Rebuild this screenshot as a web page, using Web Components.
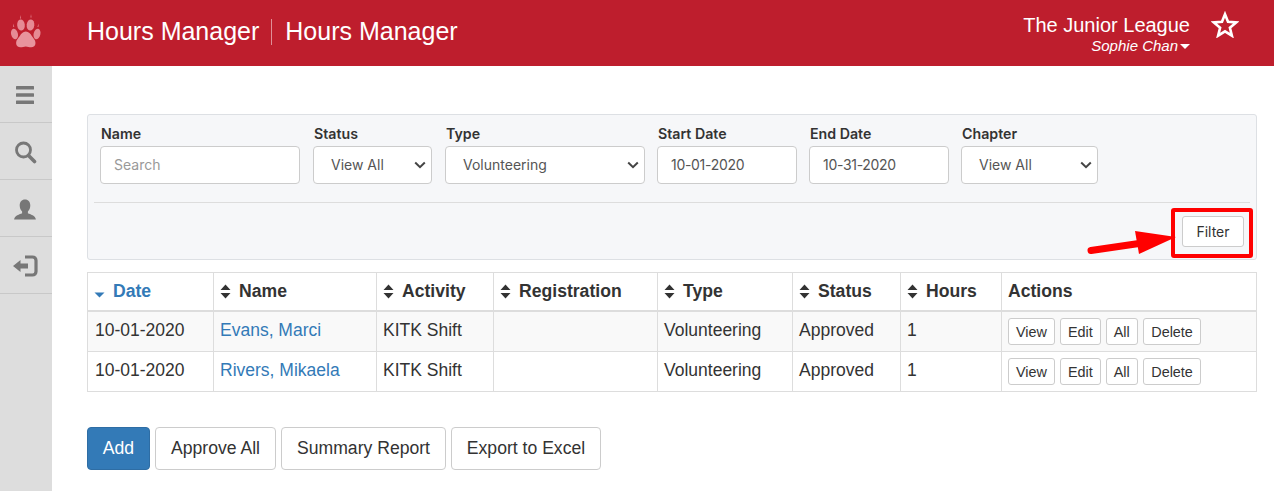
<!DOCTYPE html>
<html><head><meta charset="utf-8"><style>
html,body{margin:0;padding:0;background:#fff;height:491px;overflow:hidden}
body{font-family:"Liberation Sans",Arial,sans-serif;color:#333}
</style></head><body>
<app-shell></app-shell>
<script>
function def(name,css,html,init){
  customElements.define(name,class extends HTMLElement{
    connectedCallback(){
      if(this.shadowRoot)return;
      const r=this.attachShadow({mode:'open'});
      r.innerHTML='<style>'+css+'</style>'+(typeof html==='function'?html(this):html);
    }
  });
}
const sort='<svg width="11" height="15" viewBox="0 0 11 15" style="flex:none"><path d="M5.5 0.5L10.5 6H.5zM5.5 14.5L.5 9H10.5z" fill="#333"/></svg>';

def('top-bar',`
:host{display:flex;height:66px;background:#be1e2d;color:#fff;align-items:stretch}
.logo{width:52px;display:flex;align-items:center;justify-content:center;flex:none;padding-right:1px;box-sizing:border-box}
.titles{display:flex;align-items:center;margin-left:35px;font-size:25px;flex:1;padding-bottom:3px}
.sep{width:1px;height:26px;background:#e08f97;margin:0 13px 0 12px}
.right{display:flex;margin-right:35px;align-items:flex-start}
.org{display:flex;flex-direction:column;align-items:flex-end;padding-top:14px}
.org b{font-weight:400;font-size:20px;line-height:23px}
.org i{font-size:15px;line-height:18px;display:flex;align-items:center;gap:2px}
.org i::after{content:"";border:5px solid transparent;border-top-color:#fff;border-bottom:0;margin-top:1px}
.star{margin:11px 0 0 21px}
`,`<div class="logo"><svg width="32" height="38" viewBox="0 0 32 38" fill="#e68a94">
<ellipse cx="4.500" cy="20" rx="3.400" ry="5.400" transform="rotate(-14 4.500 20)"/>
<ellipse cx="11" cy="11" rx="3.800" ry="5.600" transform="rotate(-6 11 11)"/>
<ellipse cx="20.500" cy="11" rx="3.800" ry="5.600" transform="rotate(6 20.500 11)"/>
<ellipse cx="27" cy="20" rx="3.400" ry="5.400" transform="rotate(14 27 20)"/>
<path d="M15.800 17.500c3 0 4.600 2.200 6 4.600 1.400 2.300 3.700 3.800 3.700 6.800 0 2.900-2.100 4.300-4.300 4.300-2 0-3.500-.8-5.400-.8s-3.400.8-5.400.8c-2.200 0-4.300-1.400-4.300-4.300 0-3 2.300-4.500 3.700-6.800 1.400-2.400 3-4.600 6-4.600z" fill="#e8949d"/>
<path d="M10.500 1l.5 3.600h-1zM21 0l.5 3.600h-1zM3 9.500l1.300 3.200-1 .3zM28.700 9.500l-.3 3.500-1-.3z"/>
</svg></div>
<div class="titles"><span>Hours Manager</span><span class="sep"></span><span>Hours Manager</span></div>
<div class="right"><div class="org"><b>The Junior League</b><i>Sophie Chan</i></div>
<svg class="star" width="28" height="27" viewBox="0 0 28 27"><path d="M14 3.200l3 7.600 8.200.6-6.300 5.300 2 8-6.900-4.400-6.900 4.400 2-8L2.800 11.400l8.200-.6z" fill="none" stroke="#fff" stroke-width="2.600"/></svg></div>`);

def('side-bar',`
:host{display:block;width:52px;background:#ddd;flex:none}
div{border-bottom:1px solid #c8c8c8;display:flex;align-items:center;justify-content:center;padding:2px 3px 0 0;height:54px}
svg{display:block;fill:#777}
`,`<div><svg width="20" height="20" viewBox="0 0 20 20"><rect x="1" y="1" width="18" height="3.600" rx=".5"/><rect x="1" y="8.200" width="18" height="3.600" rx=".5"/><rect x="1" y="15.400" width="18" height="3.600" rx=".5"/></svg></div>
<div><svg width="24" height="24" viewBox="0 0 24 24"><circle cx="10.500" cy="10" r="7" fill="none" stroke="#777" stroke-width="2.800"/><path d="M15.500 15.500L21.500 21.500" stroke="#777" stroke-width="3.600" stroke-linecap="round"/></svg></div>
<div style="padding-top:4px;height:52px"><svg width="24" height="24" viewBox="0 0 24 24"><path d="M12 1.500c3.400 0 5.300 2.600 5.300 6 0 2.400-1 4.700-2.400 6v1.800c2.300 1 7.700 2.400 8 6.200H1.100c.3-3.800 5.700-5.200 8-6.200v-1.800c-1.400-1.300-2.400-3.600-2.400-6 0-3.400 1.900-6 5.300-6z"/></svg></div>
<div><svg width="26" height="22" viewBox="0 0 26 22"><path d="M1 11l7.500-6v3.500H16v5H8.500V17z"/><path d="M13 2h7.500c2 0 3.500 1.500 3.500 3.500v11c0 2-1.500 3.500-3.500 3.500H13" fill="none" stroke="#777" stroke-width="3.200"/></svg></div>`);

def('filter-field',`
:host{display:flex;flex-direction:column;font-family:Inter,sans-serif}
label{font-size:14.200px;font-weight:600;line-height:20px;height:22px;padding-left:1px;color:#333;white-space:nowrap}
.c{box-sizing:border-box;height:38px;border:1px solid #ccc;border-radius:4px;background:#fff;font-size:14px;color:#555;display:flex;align-items:center;justify-content:space-between;padding:0 5px 1px var(--pl,13px);white-space:nowrap}
.ph{color:#999}
.d{letter-spacing:-.3px}
svg{flex:none}
`,h=>{
 const t=h.getAttribute('value')||'';const sel=h.hasAttribute('select');const ph=h.hasAttribute('placeholder');
 const cls=ph?'ph':(/^\d/.test(t)?'d':'');
 return `<label>${h.getAttribute('label')}</label><div class="c" style="${sel?'--pl:17px':''}"><span class="${cls}">${t}</span>${sel?'<svg width="12" height="8" viewBox="0 0 12 8"><path d="M1.200 1.500L6 6.200l4.800-4.700" fill="none" stroke="#444" stroke-width="2"/></svg>':''}</div>`;
});

def('filter-panel',`
:host{display:block;position:relative;box-sizing:border-box;height:146px;background:#f6f7f9;border:1px solid #dde0e4;border-radius:3px;padding:9px 6px 0 6px}
.fields{display:flex;padding-left:6px;height:78px;border-bottom:1px solid #ddd}
.act{display:flex;justify-content:flex-end;padding:13px 6px 0 0}
button{box-sizing:border-box;width:62px;height:31px;background:#fff;border:1px solid #ccc;border-radius:3px;font:14px Inter,sans-serif;color:#333;padding:0}
.box{position:absolute;left:1083px;top:93px;width:82px;height:50px;box-sizing:border-box;border:4px solid #f00;border-radius:3px}
.arrow{position:absolute;left:999px;top:113px}
`,`<div class="fields">
<filter-field style="width:200px;margin-right:13px" label="Name" value="Search" placeholder></filter-field>
<filter-field style="width:119px;margin-right:13px" label="Status" value="View All" select></filter-field>
<filter-field style="width:200px;margin-right:12px" label="Type" value="Volunteering" select></filter-field>
<filter-field style="width:140px;margin-right:12px" label="Start Date" value="10-01-2020"></filter-field>
<filter-field style="width:140px;margin-right:12px" label="End Date" value="10-31-2020"></filter-field>
<filter-field style="width:137px" label="Chapter" value="View All" select></filter-field>
</div><div class="act"><button>Filter</button></div>
<div class="box"></div>
<svg class="arrow" width="92" height="30" viewBox="0 0 92 30"><path d="M4 22.500L52 15.500" stroke="#f00" stroke-width="7" stroke-linecap="round"/><path d="M48 3L89 9 52 26z" fill="#f00"/></svg>`);

def('data-table',`
:host{display:block;margin-top:12px;font-size:17.500px;color:#333}
.row{display:grid;grid-template-columns:126px 163px 117px 164px 135px 108px 101px 256px;box-sizing:border-box;height:40px;border-bottom:1px solid #ddd}
.row.h{height:40px;border-bottom-width:2px;border-top:1px solid #ddd;font-weight:700;font-size:17.600px}
.row.odd{background:#f9f9f9}
.row>*{border-left:1px solid #ddd;display:flex;align-items:center;gap:8px;padding:0 0 2px 6px;white-space:nowrap;min-width:0}
.row>*:last-child{border-right:1px solid #ddd}
.row.h>*{padding-bottom:0}
.row>.first{padding-left:7px}
a{color:#337ab7;text-decoration:none}
.row>.btns{gap:5px;padding-bottom:0}
.btns span{box-sizing:border-box;height:27px;border:1px solid #ccc;border-radius:3px;background:#fff;font-size:14.400px;display:flex;align-items:center;padding:0 7px}
.btns span:last-child{padding:0 7.500px}
`,h=>{
 const heads=['Name','Activity','Registration','Type','Status','Hours'];
 const row=(n,o)=>`<div class="row ${o?'odd':''}"><div class="first">10-01-2020</div><div><a>${n}</a></div><div>KITK Shift</div><div></div><div>Volunteering</div><div>Approved</div><div>1</div><div class="btns"><span>View</span><span>Edit</span><span>All</span><span>Delete</span></div></div>`;
 return `<div class="row h"><div><svg width="11" height="6" viewBox="0 0 11 6" style="margin-top:6px"><path d="M.5 .5h10L5.500 5.500z" fill="#337ab7"/></svg><a>Date</a></div>${heads.map(t=>`<div>${sort}<span>${t}</span></div>`).join('')}<div>Actions</div></div>`+row('Evans, Marci',1)+row('Rivers, Mikaela',0);
});

def('action-bar',`
:host{display:flex;gap:5px;margin-top:35px}
button{box-sizing:border-box;height:43px;border:1px solid #ccc;border-radius:4px;background:#fff;color:#333;font:17.600px "Liberation Sans",sans-serif;padding:0}
.p{background:#337ab7;border-color:#2e6da4;color:#fff}
`,`<button class="p" style="width:63px">Add</button><button style="width:121px">Approve All</button><button style="width:165px">Summary Report</button><button style="width:150px">Export to Excel</button>`);

def('app-shell',`
:host{display:flex;flex-direction:column;height:491px}
.b{display:flex;flex:1}
main{flex:1;padding:48px 17px 0 35px;min-width:0}
`,`<top-bar></top-bar><div class="b"><side-bar></side-bar><main><filter-panel></filter-panel><data-table></data-table><action-bar></action-bar></main></div>`);
</script></body></html>
